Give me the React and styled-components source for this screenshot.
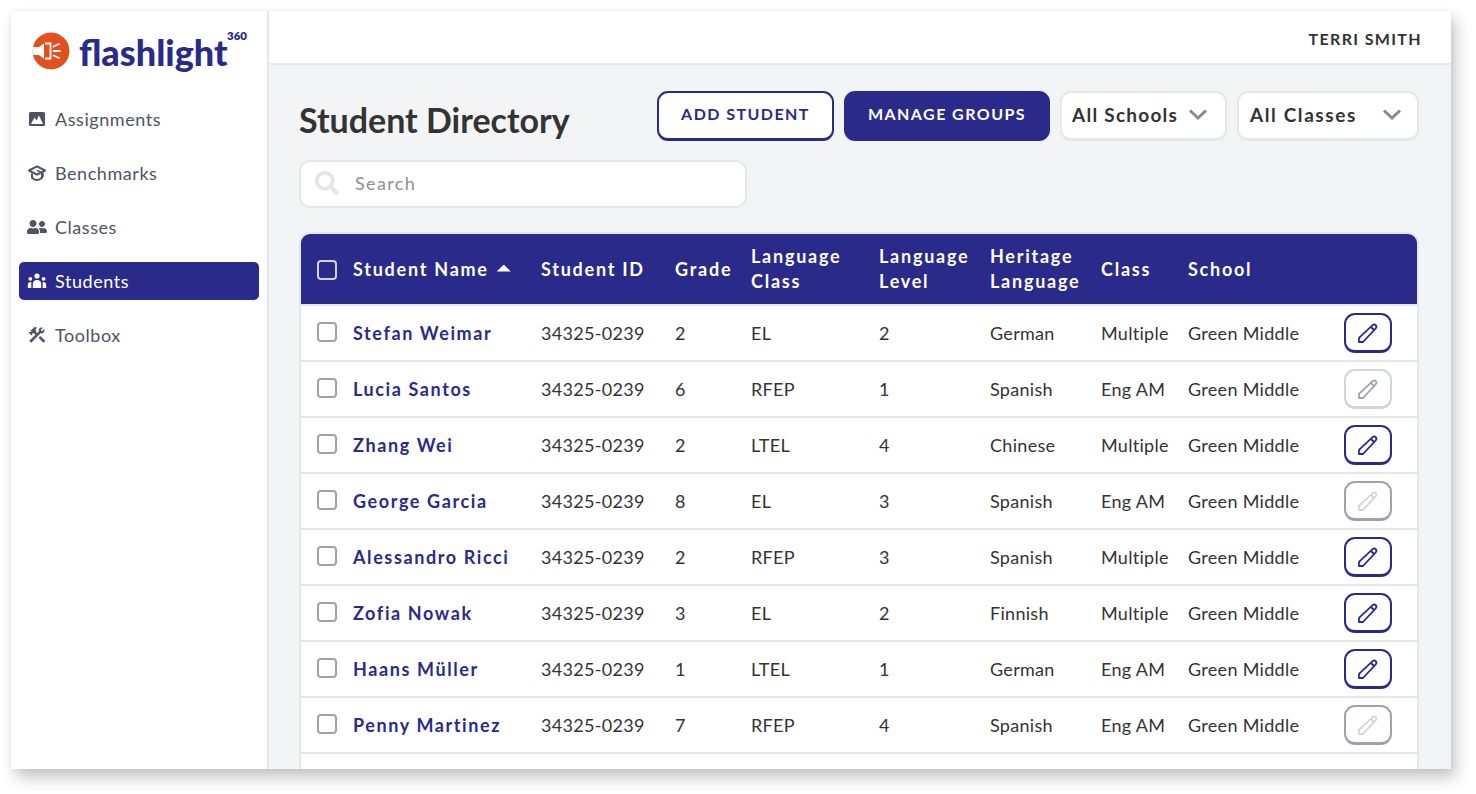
import React from "react";
import styled, { createGlobalStyle } from "styled-components";
import { FaSearch, FaUserFriends } from "react-icons/fa";
import { MdConstruction } from "react-icons/md";

const NAVY = "#2a2a8a";
const FONT = `"Lato", "Noto Sans", sans-serif`;

const Global = createGlobalStyle`
  html, body { margin: 0; padding: 0; background: #fff; }
  body { font-family: ${FONT}; color: #333; }
  * { box-sizing: border-box; }
`;
const Page = styled.div`
  width: 1476px;
  height: 794px;
  padding: 11px 25px 25px 11px;
  overflow: hidden;
`;
const Frame = styled.div`
  display: grid;
  grid-template-columns: 258px 1fr;
  height: 758px;
  background: #fff;
  overflow: hidden;
  box-shadow: 5px 9px 14px rgba(0,0,0,.22), 0 0 6px rgba(0,0,0,.06);
`;
const Sidebar = styled.aside`
  background: #fff;
  border-right: 2px solid #e5e7eb;
  padding: 0 8px;
`;
const LogoRow = styled.div`
  display: flex;
  align-items: flex-start;
  height: 89px;
  padding: 21px 0 0 13px;
`;
const LogoWord = styled.span`
  position: relative;
  margin-left: 9px;
  margin-top: -3px;
  font: 900 36px/46px ${FONT};
  color: ${NAVY};
  letter-spacing: 0;
`;
const LogoSup = styled.sup`
  position: absolute;
  left: 148px;
  top: 0;
  font: 800 11.5px/14px ${FONT};
  letter-spacing: 0;
  color: ${NAVY};
`;
const Nav = styled.nav`
  display: flex;
  flex-direction: column;
  gap: 16px;
`;
const NavItem = styled.a`
  display: flex;
  align-items: center;
  height: 38px;
  padding: 0 0 1px 8px;
  border-radius: 5px;
  font-size: 18px;
  letter-spacing: .55px;
  color: ${p => (p.$active ? "#fff" : "#4b5563")};
  background: ${p => (p.$active ? NAVY : "transparent")};
`;
const NavIcon = styled.span`
  display: flex;
  align-items: center;
  justify-content: center;
  width: 20px;
  height: 20px;
  margin-right: 8px;
  svg { width: 20px; height: 20px; flex: none; }
`;
const Main = styled.main`
  display: flex;
  flex-direction: column;
  min-width: 0;
`;
const TopBar = styled.header`
  flex: none;
  display: flex;
  align-items: center;
  justify-content: flex-end;
  height: 54px;
  padding: 2px 29px 0 0;
  border-bottom: 2px solid #e5e7eb;
  font-size: 16px;
  font-weight: 700;
  letter-spacing: 1.35px;
  color: #333;
`;
const Content = styled.div`
  flex: 1;
  background: #f3f4f6;
  padding: 26px 32px 0 30px;
  min-height: 0;
`;
const TitleRow = styled.div`
  display: flex;
  align-items: center;
  justify-content: space-between;
  height: 50px;
`;
const Title = styled.h1`
  margin: 6px 0 0;
  font-size: 34px;
  font-weight: 700;
  color: #333;
`;
const Controls = styled.div`
  display: flex;
  gap: 10px;
`;
const Button = styled.button`
  height: 50px;
  width: ${p => p.$w}px;
  padding: 0 0 4px;
  border-radius: 11px;
  border: 2px solid ${NAVY};
  border-bottom-width: 3px;
  background: ${p => (p.$solid ? NAVY : "#fff")};
  color: ${p => (p.$solid ? "#fff" : NAVY)};
  font: 700 16px ${FONT};
  letter-spacing: 1.45px;
`;
const Select = styled.div`
  display: flex;
  align-items: center;
  justify-content: space-between;
  width: ${p => p.$w}px;
  height: 50px;
  padding: 0 ${p => p.$pr}px 2px ${p => p.$pl}px;
  background: #fff;
  border: 2px solid #e5e7eb;
  border-bottom-width: 3px;
  border-radius: 11px;
  font-size: 19px;
  font-weight: 700;
  letter-spacing: ${p => p.$ls}px;
  color: #333;
`;
const Chevron = styled.svg`
  width: 18px;
  height: 11px;
  fill: none;
  stroke: #8a8a8a;
  stroke-width: 3;
`;
const SearchBox = styled.div`
  display: flex;
  align-items: center;
  gap: 16px;
  width: 448px;
  height: 48px;
  margin-top: 19px;
  padding: 0 14px 2px;
  background: #fff;
  border: 2px solid #e5e7eb;
  border-radius: 11px;
  font-size: 18px;
  letter-spacing: 1.35px;
  color: #8f8f8f;
  svg { width: 24px; height: 24px; color: #e5e5e5; }
`;
const TableWrap = styled.div`
  margin-top: 24px;
  width: 1120px;
  border: 2px solid #e5e7eb;
  border-bottom: 0;
  border-radius: 11px 11px 0 0;
  background: #fff;
  overflow: hidden;
`;
const Table = styled.table`
  width: 100%;
  table-layout: fixed;
  border-collapse: separate;
  border-spacing: 0;
`;
const Th = styled.th`
  height: 70px;
  padding: 0;
  background: ${NAVY};
  color: #fff;
  font-size: 18px;
  line-height: 25px;
  font-weight: 700;
  letter-spacing: 1.75px;
  text-align: left;
  vertical-align: middle;
`;
const Tr = styled.tr`
  height: 56px;
`;
const Td = styled.td`
  height: 56px;
  padding: 0;
  border-top: 2px solid #e5e7eb;
  font-size: 18px;
  color: #333;
  letter-spacing: .3px;
  vertical-align: middle;
`;
const NameLink = styled.a`
  font-weight: 700;
  color: ${NAVY};
  letter-spacing: 1.6px;
  font-size: 18px;
`;
const Check = styled.span`
  display: block;
  width: 20px;
  height: 20px;
  margin: ${p => (p.$head ? "2px" : "-2px")} 0 0 16px;
  border: 2px solid ${p => (p.$head ? "#d1d5db" : "#9ca3af")};
  border-radius: 4px;
  background: ${p => (p.$head ? "transparent" : "#fff")};
`;
const SortCaret = styled.span`
  display: inline-block;
  width: 14px;
  height: 7px;
  margin-left: 8px;
  vertical-align: 4px;
  background: #fff;
  clip-path: polygon(50% 0, 100% 100%, 0 100%);
`;
const EditButton = styled.button`
  display: flex;
  align-items: center;
  justify-content: center;
  width: 48px;
  height: 40px;
  padding: 0;
  border-radius: 11px;
  border: 2px solid ${p => ({ on: NAVY, light: "#d1d5db", dim: "#9ca3af" }[p.$state])};
  border-bottom-width: 3px;
  background: #fff;
  color: ${p => ({ on: NAVY, light: "#9ca3af", dim: "#d1d5db" }[p.$state])};
`;

const Logo = () => (
  <svg width="38" height="38" viewBox="0 0 38 38" aria-hidden="true">
    <circle cx="19" cy="19" r="18.5" fill="#e2501f" />
    <path d="M0.5 15h6.3l5.2-3.5V26.500L6.800 23H0.500z" fill="#fff" />
    <path d="M13 11.500h5.500v15H13" fill="none" stroke="#fff" strokeWidth="1.800" />
    <path d="M21.500 19h6.500M21.500 14.500l5.500-2.500M21.500 23.500l5.500 2.500" stroke="#fff" strokeWidth="1.800" strokeLinecap="round" />
  </svg>
);
const ImageIcon = () => (
  <svg viewBox="0 0 20 20" aria-hidden="true">
    <rect x="2" y="3" width="16" height="14" rx="1.500" fill="#4b5563" />
    <path d="M4 15l3.500-6.500 2 3 2.500-5 4 8.500z" fill="#fff" />
  </svg>
);
const CapIcon = () => (
  <svg viewBox="0 0 20 20" fill="none" stroke="#4b5563" aria-hidden="true">
    <path d="M10 3.300L18 7.500 10 11.700 2 7.500z" strokeWidth="2" strokeLinejoin="round" />
    <path d="M5 10.500v4.300c1.500 1.500 3.200 2.200 5 2.200s3.500-.7 5-2.200v-4.300" strokeWidth="2" />
    <path d="M10 7.500l6 2.800v3.700" strokeWidth="1.400" />
  </svg>
);
const GroupIcon = () => (
  <svg viewBox="0 0 20 20" fill="#fff" aria-hidden="true">
    <circle cx="10" cy="5" r="2.600" />
    <circle cx="3.400" cy="7.800" r="1.900" />
    <circle cx="16.600" cy="7.800" r="1.900" />
    <path d="M5.800 17v-4.200c0-2.100 1.700-3.700 4.200-3.700s4.200 1.600 4.200 3.700V17z" />
    <path d="M.8 17v-3.200c0-1.500 1-2.700 3.500-2.700v5.900zM19.200 17v-3.200c0-1.500-1-2.700-3.500-2.700v5.900z" />
  </svg>
);
const Pencil = () => (
  <svg width="22" height="22" viewBox="0 0 22 22" fill="none" stroke="currentColor" strokeWidth="1.800" aria-hidden="true">
    <path d="M2 20v-4.200L15.600 3.200a2.200 2.200 0 0 1 3.100 0 2.200 2.200 0 0 1 0 3.100L6 20z" strokeLinejoin="round" />
    <path d="M14 5l3 3" />
  </svg>
);
const ChevronDown = () => (
  <Chevron viewBox="0 0 18 11" aria-hidden="true"><path d="M1 1.500l8 7.500 8-7.500" /></Chevron>
);

const cols = [52, 188, 134, 76, 128, 111, 111, 87, 156, 73];
const students = [
  ["Stefan Weimar", "2", "EL", "2", "German", "Multiple", "on"],
  ["Lucia Santos", "6", "RFEP", "1", "Spanish", "Eng AM", "light"],
  ["Zhang Wei", "2", "LTEL", "4", "Chinese", "Multiple", "on"],
  ["George Garcia", "8", "EL", "3", "Spanish", "Eng AM", "dim"],
  ["Alessandro Ricci", "2", "RFEP", "3", "Spanish", "Multiple", "on"],
  ["Zofia Nowak", "3", "EL", "2", "Finnish", "Multiple", "on"],
  ["Haans Müller", "1", "LTEL", "1", "German", "Eng AM", "on"],
  ["Penny Martinez", "7", "RFEP", "4", "Spanish", "Eng AM", "dim"],
];
const nav = [
  [<ImageIcon />, "Assignments"],
  [<CapIcon />, "Benchmarks"],
  [<FaUserFriends />, "Classes"],
  [<GroupIcon />, "Students", true],
  [<MdConstruction />, "Toolbox"],
];

export default function App() {
  return (
    <Page>
      <Global />
      <Frame>
        <Sidebar>
          <LogoRow>
            <Logo />
            <LogoWord>flashlight<LogoSup>360</LogoSup></LogoWord>
          </LogoRow>
          <Nav>
            {nav.map(([icon, label, active]) => (
              <NavItem key={label} $active={active}><NavIcon>{icon}</NavIcon>{label}</NavItem>
            ))}
          </Nav>
        </Sidebar>
        <Main>
          <TopBar>TERRI SMITH</TopBar>
          <Content>
            <TitleRow>
              <Title>Student Directory</Title>
              <Controls>
                <Button $w={177}>ADD STUDENT</Button>
                <Button $w={206} $solid>MANAGE GROUPS</Button>
                <Select $w={167} $pl={10} $pr={18} $ls={1.25}>All Schools<ChevronDown /></Select>
                <Select $w={182} $pl={11} $pr={16} $ls={1.6}>All Classes<ChevronDown /></Select>
              </Controls>
            </TitleRow>
            <SearchBox><FaSearch />Search</SearchBox>
            <TableWrap>
              <Table>
                <colgroup>{cols.map((w, i) => <col key={i} width={w} />)}</colgroup>
                <thead>
                  <tr>
                    <Th><Check $head /></Th>
                    <Th>Student Name<SortCaret /></Th>
                    <Th>Student ID</Th>
                    <Th>Grade</Th>
                    <Th>Language<br />Class</Th>
                    <Th>Language<br />Level</Th>
                    <Th>Heritage<br />Language</Th>
                    <Th>Class</Th>
                    <Th>School</Th>
                    <Th />
                  </tr>
                </thead>
                <tbody>
                  {students.map(([name, grade, lc, lvl, her, cls, st]) => (
                    <Tr key={name}>
                      <Td><Check /></Td>
                      <Td><NameLink>{name}</NameLink></Td>
                      <Td>34325-0239</Td>
                      <Td>{grade}</Td>
                      <Td>{lc}</Td>
                      <Td>{lvl}</Td>
                      <Td>{her}</Td>
                      <Td>{cls}</Td>
                      <Td>Green Middle</Td>
                      <Td><EditButton $state={st}><Pencil /></EditButton></Td>
                    </Tr>
                  ))}
                  <Tr><Td colSpan={10} /></Tr>
                </tbody>
              </Table>
            </TableWrap>
          </Content>
        </Main>
      </Frame>
    </Page>
  );
}
